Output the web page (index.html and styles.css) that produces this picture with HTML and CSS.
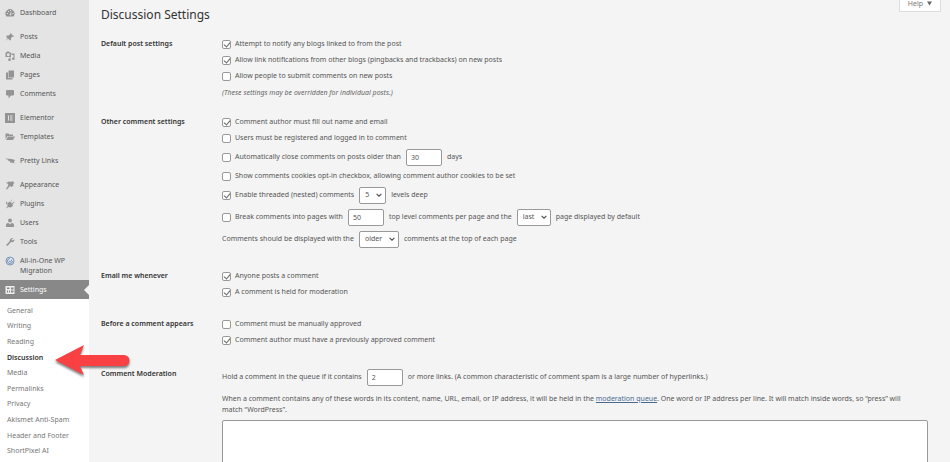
FILE: index.html
```
<!DOCTYPE html>
<html lang="en">
<head>
    <meta charset="utf-8">
    <title>Discussion Settings</title>
    <link rel="stylesheet" href="styles.css">
</head>
<body>
<div class="wrap">
    <nav class="sidebar">
        <ul class="menu">
            <li><a href="#"><svg viewBox="0 0 20 20"><path d="M3 17a9 9 0 1 1 14 0z"/><path class="cut" d="M9 14l4-8-1 9zM4 10h2v2H4zM6 6h2v2H6zM10 4h2v2h-2zM15 10h2v2h-2z"/></svg>Dashboard</a></li>
            <li class="sep"><a href="#"><svg viewBox="0 0 20 20"><path d="M11 2l7 7-2 1-1-1-3 3v4l-2 1-4-4-5 5 4-6-3-3 2-2h3l4-3-1-1z"/></svg>Posts</a></li>
            <li><a href="#"><svg viewBox="0 0 20 20"><path fill-rule="evenodd" d="M1 3h2l1-2h4l1 2h3v9H1zM6.500 4.500a3 3 0 1 0 .1 0z"/><path d="M13 5h6v10a2.500 2.500 0 1 1-2-2V8h-4zM9 13h2v3a2.500 2.500 0 1 1-2-1z"/></svg>Media</a></li>
            <li><a href="#"><svg viewBox="0 0 20 20"><path d="M7 1h11v14H7z"/><path d="M2 5h4v11h9v3H2z"/></svg>Pages</a></li>
            <li><a href="#"><svg viewBox="0 0 20 20"><path d="M4 2h12a2 2 0 0 1 2 2v7a2 2 0 0 1-2 2h-4l-5 6v-6H4a2 2 0 0 1-2-2V4a2 2 0 0 1 2-2z"/></svg>Comments</a></li>
            <li class="sep"><a href="#"><svg viewBox="0 0 20 20"><path d="M0 0h20v20H0z"/><path class="cut" d="M6 5h2v10H6zM10 5h5v2h-5zM10 9h5v2h-5zM10 13h5v2h-5z"/></svg>Elementor</a></li>
            <li><a href="#"><svg viewBox="0 0 20 20"><path d="M1 3h6l2 2h7v3H5l-4 6z"/><path d="M6 9h14l-4 7H2z"/></svg>Templates</a></li>
            <li class="sep"><a href="#"><svg viewBox="0 0 20 20"><path d="M0 5l13 1 7 2-2 3 1 4-4-2-3 1-3-4-4-1 2-1-5-2z"/></svg>Pretty Links</a></li>
            <li class="sep"><a href="#"><svg viewBox="0 0 20 20"><path d="M8 3l5 1 2-2 4 4-3 2 1 3-4 3-3-2-6 7-2-1 5-8-2-3-3-1z"/></svg>Appearance</a></li>
            <li><a href="#"><svg viewBox="0 0 20 20"><path d="M13 1l1 1-3 4 3 3 4-4 1 1-4 5 1 2c-2 4-6 5-9 3l-5 3 3-5c-1-4 1-8 5-9l1 1zM2 5l3 2-1 4-2-2z"/></svg>Plugins</a></li>
            <li><a href="#"><svg viewBox="0 0 20 20"><circle cx="10" cy="5" r="4"/><path d="M2 18v-4c0-3 3-4 5-4l3 3 3-3c2 0 5 1 5 4v4z"/></svg>Users</a></li>
            <li><a href="#"><svg viewBox="0 0 20 20"><path d="M17 2l-4 3 1 2 5-2c0 4-3 6-7 5l-7 8-3-2 7-7c0-4 3-8 8-7z"/></svg>Tools</a></li>
            <li><a href="#"><svg viewBox="0 0 20 20"><circle class="ring" cx="10" cy="10" r="8"/><path class="ring" d="M10 5a5 5 0 1 0 5 5M8 10l3 2 3-5"/></svg>All-in-One WP Migration</a></li>
            <li class="current"><a href="#"><svg viewBox="0 0 20 20"><path fill-rule="evenodd" d="M1 2h18v16H1zM4 5v3h5V5zM4 11v4h2v-4zM8 11v4h2v-4zM12 5v4h5V5zM12 11v4h5v-4z"/></svg>Settings</a></li>
        </ul>
        <ul class="submenu">
            <li><a href="#">General</a></li>
            <li><a href="#">Writing</a></li>
            <li><a href="#">Reading</a></li>
            <li><a class="active" href="#">Discussion</a></li>
            <li><a href="#">Media</a></li>
            <li><a href="#">Permalinks</a></li>
            <li><a href="#">Privacy</a></li>
            <li><a href="#">Akismet Anti-Spam</a></li>
            <li><a href="#">Header and Footer</a></li>
            <li><a href="#">ShortPixel AI</a></li>
        </ul>
        <svg class="pointer" viewBox="0 0 80 38"><path d="M1 16L30 1l-4 10h44a5 5 0 0 1 0 11H26l4 9z"/></svg>
    </nav>
    <main class="content">
        <header class="top">
            <h1>Discussion Settings</h1>
            <button class="help" type="button">Help <svg viewBox="0 0 10 10"><path d="M0 1h10L5 9z"/></svg></button>
        </header>
        <form class="settings">
            <section class="group">
                <h2>Default post settings</h2>
                <div class="fields">
                    <div class="line"><label><input type="checkbox" checked>Attempt to notify any blogs linked to from the post</label></div>
                    <div class="line"><label><input type="checkbox" checked>Allow link notifications from other blogs (pingbacks and trackbacks) on new posts</label></div>
                    <div class="line"><label><input type="checkbox">Allow people to submit comments on new posts</label></div>
                    <p class="note">(These settings may be overridden for individual posts.)</p>
                </div>
            </section>
            <section class="group">
                <h2>Other comment settings</h2>
                <div class="fields">
                    <div class="line"><label><input type="checkbox" checked>Comment author must fill out name and email</label></div>
                    <div class="line"><label><input type="checkbox">Users must be registered and logged in to comment</label></div>
                    <div class="line tall"><label><input type="checkbox">Automatically close comments on posts older than</label><input class="num" id="days" type="text" value="30"><label for="days">days</label></div>
                    <div class="line"><label><input type="checkbox">Show comments cookies opt-in checkbox, allowing comment author cookies to be set</label></div>
                    <div class="line tall"><label><input type="checkbox" checked>Enable threaded (nested) comments</label><span class="pick"><select id="depth"><option>5</option></select><svg viewBox="0 0 10 6"><path d="M1 1l4 4 4-4"/></svg></span><label for="depth">levels deep</label></div>
                    <div class="line tall"><label><input type="checkbox">Break comments into pages with</label><input class="num" id="per-page" type="text" value="50"><label for="per-page">top level comments per page and the</label><span class="pick"><select id="which-page"><option>last</option></select><svg viewBox="0 0 10 6"><path d="M1 1l4 4 4-4"/></svg></span><label for="which-page">page displayed by default</label></div>
                    <div class="line tall"><label for="order">Comments should be displayed with the</label><span class="pick"><select id="order"><option>older</option></select><svg viewBox="0 0 10 6"><path d="M1 1l4 4 4-4"/></svg></span><label for="order">comments at the top of each page</label></div>
                </div>
            </section>
            <section class="group spaced">
                <h2>Email me whenever</h2>
                <div class="fields">
                    <div class="line"><label><input type="checkbox" checked>Anyone posts a comment</label></div>
                    <div class="line"><label><input type="checkbox" checked>A comment is held for moderation</label></div>
                </div>
            </section>
            <section class="group">
                <h2>Before a comment appears</h2>
                <div class="fields">
                    <div class="line"><label><input type="checkbox">Comment must be manually approved</label></div>
                    <div class="line"><label><input type="checkbox" checked>Comment author must have a previously approved comment</label></div>
                </div>
            </section>
            <section class="group spaced">
                <h2>Comment Moderation</h2>
                <div class="fields">
                    <div class="line tall"><label for="links">Hold a comment in the queue if it contains</label><input class="num" id="links" type="text" value="2"><label for="links">or more links. (A common characteristic of comment spam is a large number of hyperlinks.)</label></div>
                    <label class="help-text" for="words">When a comment contains any of these words in its content, name, URL, email, or IP address, it will be held in the <a href="#">moderation queue</a>. One word or IP address per line. It will match inside words, so “press” will match “WordPress”.</label>
                    <textarea id="words" rows="10"></textarea>
                </div>
            </section>
        </form>
    </main>
</div>
</body>
</html>
```
FILE: styles.css
```
* {
    box-sizing: border-box;
}
body {
    margin: 0;
    background: #f4f4f4;
    color: #555;
    font: 7px/10px "Noto Sans", sans-serif;
}
ul, h1, h2, p {
    margin: 0;
    padding: 0;
    list-style: none;
}
.wrap {
    display: flex;
    height: 100vh;
    overflow: hidden;
}

/* sidebar */
.sidebar {
    position: relative;
    display: flex;
    flex-direction: column;
    flex: 0 0 89px;
    background: #e4e4e4;
}
.sidebar a {
    color: #555;
    text-decoration: none;
}
.menu {
    padding-top: 3px;
}
.menu .sep {
    margin-top: 5px;
}
.menu a {
    display: flex;
    gap: 5px;
    padding: 5px 10px 4px 5px;
}
.menu svg {
    flex: none;
    width: 10px;
    height: 10px;
    fill: #949494;
}
.menu .cut {
    fill: #e4e4e4;
}
.menu .ring {
    fill: none;
    stroke: #7895bd;
    stroke-width: 2;
}
.menu .current {
    position: relative;
    background: #888;
}
.menu .current a {
    color: #fff;
}
.menu .current svg {
    fill: #eee;
}
.menu .current::after {
    content: "";
    position: absolute;
    right: 0;
    top: 5px;
    border: 5px solid transparent;
    border-left: 0;
    border-right-color: #f4f4f4;
}
.submenu {
    display: flex;
    flex: 1;
    flex-direction: column;
    padding: 4px 7px 3px;
    background: #fff;
}
.submenu li {
    display: flex;
    flex: 1;
    align-items: center;
    white-space: nowrap;
}
.submenu a {
    color: #777;
}
.submenu .active {
    color: #333;
    font-weight: 600;
}
.pointer {
    position: absolute;
    left: 54px;
    top: 344px;
    width: 80px;
    height: 38px;
    fill: #f94144;
    filter: drop-shadow(0 2px 1px rgba(0, 0, 0, .5));
}

/* content */
.content {
    flex: 1;
    min-width: 0;
    padding-left: 12px;
}
.top {
    display: flex;
    justify-content: space-between;
    align-items: flex-start;
    height: 36px;
    padding-right: 9px;
}
h1 {
    padding-top: 5px;
    color: #333;
    font-size: 12px;
    line-height: 20px;
    font-weight: 400;
}
.help {
    display: flex;
    align-items: center;
    gap: 4px;
    height: 12px;
    padding: 0 8px 4px;
    border: 1px solid #ddd;
    border-top: 0;
    background: #fff;
    color: #777;
    font: inherit;
}
.help svg {
    width: 5px;
    height: 5px;
    fill: #666;
}
.settings {
    display: flex;
    flex-direction: column;
    gap: 16px;
    padding-right: 22px;
}
.group {
    display: flex;
}
.spaced {
    margin-top: 2px;
}
h2 {
    flex: 0 0 121px;
    color: #333;
    font-size: 7px;
    line-height: 16px;
    font-weight: 600;
}
.fields {
    flex: 1;
    min-width: 0;
}
.line {
    display: flex;
    align-items: center;
    gap: 5px;
    min-height: 16px;
}
.tall {
    min-height: 22px;
}
.line label {
    display: flex;
    align-items: center;
    gap: 4px;
}
.note {
    margin-top: 4px;
    color: #666;
    font-style: italic;
}
input[type=checkbox] {
    appearance: none;
    width: 9px;
    height: 9px;
    margin: 0;
    border: 1px solid #999;
    border-radius: 2px;
    background: #fff;
}
input[type=checkbox]:checked::before {
    content: "";
    display: block;
    width: 3px;
    height: 5px;
    margin: 0 2px;
    border: solid #666;
    border-width: 0 1px 1px 0;
    transform: rotate(40deg);
}
.num, select, textarea {
    border: 1px solid #999;
    border-radius: 2px;
    background: #fff;
    color: #555;
    font: inherit;
}
.num {
    width: 36px;
    height: 17px;
    padding: 0 4px;
}
.pick {
    display: grid;
    align-items: center;
}
.pick select, .pick svg {
    grid-area: 1 / 1;
}
.pick svg {
    justify-self: end;
    width: 6px;
    height: 4px;
    margin-right: 4px;
    fill: none;
    stroke: #555;
    stroke-width: 2;
    pointer-events: none;
}
select {
    appearance: none;
    height: 17px;
    padding: 0 15px 0 5px;
}
.help-text {
    display: block;
    margin: 5px 0;
    padding-right: 8px;
    line-height: 11px;
}
.help-text a {
    color: #4a6a8f;
}
textarea {
    display: block;
    width: 100%;
    resize: none;
}
```
